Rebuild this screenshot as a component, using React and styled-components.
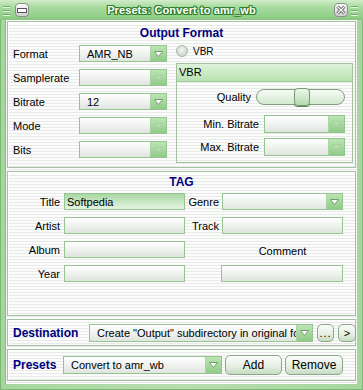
import { Fragment } from 'react';
import styled, { createGlobalStyle, css } from 'styled-components';

const GlobalStyle = createGlobalStyle`
  html, body {
    margin: 0;
    padding: 0;
    background: #fff;
  }
  body {
    font-family: 'Liberation Sans', Arial, sans-serif;
    font-size: 11px;
    color: #000;
  }
`;

const stripes = css`
  background: repeating-linear-gradient(
    to bottom,
    #fbfcfb 0,
    #fbfcfb 2px,
    #e7eae7 2px,
    #e7eae7 3px
  );
`;

const Window = styled.div`
  width: 363px;
  height: 390px;
  box-sizing: border-box;
  display: flex;
  flex-direction: column;
  background: linear-gradient(to right, #a6d69e, #b6deaf 50%, #a6d69e);
  box-shadow: inset 0 0 0 1px #7cb875;
`;

const TitleBar = styled.div`
  height: 20px;
  flex: none;
  display: flex;
  align-items: center;
  padding: 0 5px 0 3px;
  box-sizing: border-box;
  background: linear-gradient(to bottom, #d2ecca 0, #a8dca0 35%, #93d08a 80%, #86c47e 100%);
`;

const Grip = styled.div`
  width: 7px;
  height: 11px;
  background: repeating-linear-gradient(
    to bottom,
    #6fae68 0,
    #6fae68 1px,
    #e6f5e2 1px,
    #e6f5e2 2px,
    transparent 2px,
    transparent 4px
  );
  margin-top: 2px;
`;

const WinButton = styled.div`
  width: 14px;
  height: 14px;
  box-sizing: border-box;
  border: 1px solid #8d8d8d;
  border-radius: 4px;
  background: linear-gradient(to bottom, #fbfbfb, #cfd2cf);
  display: flex;
  align-items: center;
  justify-content: center;
  margin: ${(p) => (p.$right ? '0 3px 0 0' : '0 0 0 5px')};
`;

const Title = styled.div`
  flex: 1;
  text-align: center;
  font-weight: bold;
  font-size: 11px;
  color: #fff;
  letter-spacing: 0.1px;
  text-shadow: -1px 0 #2f7f2a, 1px 0 #2f7f2a, 0 -1px #2f7f2a, 0 1px #2f7f2a,
    1px 1px #2f7f2a, -1px -1px #2f7f2a, 1px -1px #2f7f2a, -1px 1px #2f7f2a;
`;

const Body = styled.div`
  flex: 1;
  margin: 0 6px 6px 5px;
  padding: 1px 1px 3px 1px;
  display: flex;
  flex-direction: column;
  gap: 3px;
  border-left: 1px solid #86bd80;
  ${stripes};
`;

const Panel = styled.section`
  height: ${(p) => p.$h}px;
  flex: none;
  box-sizing: border-box;
  border: 1px solid #a3c3a0;
  box-shadow: inset 1px 1px 0 #ffffff;
  display: flex;
  flex-direction: ${(p) => (p.$row ? 'row' : 'column')};
  align-items: ${(p) => (p.$row ? 'center' : 'stretch')};
  padding-left: ${(p) => (p.$row ? '5px' : '0')};
`;

const Heading = styled.h2`
  margin: 0;
  height: ${(p) => p.$h}px;
  line-height: ${(p) => p.$h}px;
  text-align: center;
  font-size: 12px;
  font-weight: bold;
  color: #000080;
`;

const InlineHeading = styled.span`
  width: ${(p) => p.$w}px;
  flex: none;
  font-size: 12px;
  font-weight: bold;
  color: #000080;
`;

const FormatColumns = styled.div`
  display: flex;
  padding-left: 5px;
  gap: 9px;
`;

const LeftGrid = styled.div`
  display: grid;
  grid-template-columns: 66px 88px;
  grid-auto-rows: 17px;
  row-gap: 7px;
  align-items: center;
`;

const Label = styled.span`
  white-space: nowrap;
  text-align: ${(p) => p.$align || 'left'};
  padding-right: ${(p) => p.$pr || 0}px;
`;

const RightCol = styled.div`
  width: 177px;
  display: flex;
  flex-direction: column;
`;

const CheckRow = styled.div`
  height: 12px;
  display: flex;
  align-items: center;
  gap: 5px;
  font-size: 10px;
`;

const Radio = styled.span`
  width: 12px;
  height: 12px;
  box-sizing: border-box;
  border-radius: 50%;
  border: 1px solid #a9b7a8;
  background: radial-gradient(circle at 45% 40%, #f4f7f4 0, #d2dcd1 60%, #b8c7b6 100%);
`;

const GroupBox = styled.div`
  margin-top: 6px;
  height: 100px;
  box-sizing: border-box;
  border: 1px solid #a3c3a0;
  display: flex;
  flex-direction: column;
`;

const GroupHeader = styled.div`
  height: 17px;
  line-height: 17px;
  padding-left: 2px;
  background: linear-gradient(to bottom, #dff2da, #b9e1b1);
  border-bottom: 1px solid #9fcf98;
`;

const GroupRow = styled.div`
  display: flex;
  align-items: center;
  justify-content: flex-end;
  gap: 5px;
  padding-right: 7px;
  margin-top: ${(p) => p.$mt}px;
`;

const Track = styled.div`
  position: relative;
  width: 89px;
  height: 16px;
  box-sizing: border-box;
  border: 1px solid #7f9f7b;
  border-radius: 8px;
  background: linear-gradient(to bottom, #f6fbf5, #d3e8ce);
`;

const Thumb = styled.div`
  position: absolute;
  top: -2px;
  width: 16px;
  height: 18px;
  box-sizing: border-box;
  border: 1px solid #789874;
  border-radius: 4px;
  background: linear-gradient(to bottom, #eef8eb, #b3dbab);
  box-shadow: 0 1px 0 #5f7f5b;
`;

const Combo = styled.div`
  width: ${(p) => p.$w}px;
  height: ${(p) => p.$h || 17}px;
  flex: none;
  box-sizing: border-box;
  border: 1px solid #96c490;
  background: linear-gradient(to bottom, #ffffff, #e0e5e0);
  display: flex;
`;

const ComboText = styled.span`
  flex: 1;
  min-width: 0;
  overflow: hidden;
  white-space: nowrap;
  padding-left: 7px;
  display: flex;
  align-items: center;
`;

const DropButton = styled.span`
  width: 15px;
  flex: none;
  display: flex;
  align-items: center;
  justify-content: center;
  background: linear-gradient(to bottom, #bde4b5, #90cb88);
  border-left: 1px solid #a9d4a3;
`;

const TagGrid = styled.div`
  display: grid;
  grid-template-columns: 56px 121px 37px 121px;
  grid-auto-rows: 17px;
  row-gap: 7px;
  align-items: center;
`;

const Field = styled.div`
  height: 17px;
  box-sizing: border-box;
  border: 1px solid #96c490;
  background: ${(p) =>
    p.$filled
      ? 'linear-gradient(to bottom, #a9d8a3, #d4ecd0 70%, #e4f2e1)'
      : 'linear-gradient(to bottom, #ffffff, #dfe4df)'};
  padding-left: 2px;
  display: flex;
  align-items: center;
  margin-left: ${(p) => p.$ml || 0}px;
`;

const CommentLabel = styled.span`
  align-self: end;
  text-align: center;
  margin-bottom: 1px;
  line-height: 11px;
`;

const PushButton = styled.button`
  width: ${(p) => p.$w}px;
  height: ${(p) => p.$h || 18}px;
  margin-left: ${(p) => p.$ml || 4}px;
  flex: none;
  padding: 0;
  box-sizing: border-box;
  border: 1px solid #8ba888;
  border-radius: 5px;
  background: linear-gradient(to bottom, #fbfdfb, #e3eee1 60%, #c6dcc2);
  font-family: 'Liberation Sans', Arial, sans-serif;
  font-size: ${(p) => p.$fs || 11}px;
  color: #000;
  letter-spacing: ${(p) => p.$ls || 0}px;
`;

const Arrow = ({ faded }) => (
  <svg width="9" height="6" viewBox="0 0 9 6">
    <path
      d="M0.5 0.5 H8.5 L4.5 5.5 Z"
      fill={faded ? '#b7ddb0' : '#ffffff'}
      stroke={faded ? '#a5d19e' : '#6f9f6a'}
      strokeWidth="1"
    />
  </svg>
);

const ComboBox = ({ w, h, text, faded }) => (
  <Combo $w={w} $h={h}>
    <ComboText>{text}</ComboText>
    <DropButton>
      <Arrow faded={faded} />
    </DropButton>
  </Combo>
);

const formatRows = [
  { label: 'Format', value: 'AMR_NB' },
  { label: 'Samplerate', value: '' },
  { label: 'Bitrate', value: '12' },
  { label: 'Mode', value: '' },
  { label: 'Bits', value: '' },
];

const quality = 0.42;

export default function App() {
  return (
    <>
      <GlobalStyle />
      <Window>
        <TitleBar>
          <Grip />
          <WinButton>
            <svg width="10" height="5" viewBox="0 0 10 5">
              <rect x="0.5" y="0.5" width="9" height="4" fill="#fff" stroke="#555" />
            </svg>
          </WinButton>
          <Title>Presets: Convert to amr_wb</Title>
          <WinButton $right>
            <svg width="10" height="10" viewBox="0 0 10 10">
              <path d="M1.5 1.5 L8.5 8.5 M8.5 1.5 L1.5 8.5" stroke="#555" strokeWidth="3" />
              <path d="M1.5 1.5 L8.5 8.5 M8.5 1.5 L1.5 8.5" stroke="#fff" strokeWidth="1.2" />
            </svg>
          </WinButton>
          <Grip />
        </TitleBar>

        <Body>
          <Panel $h={147}>
            <Heading $h={23}>Output Format</Heading>
            <FormatColumns>
              <LeftGrid>
                {formatRows.map((r) => (
                  <Fragment key={r.label}>
                    <Label>{r.label}</Label>
                    <ComboBox w={88} text={r.value} faded={!r.value} />
                  </Fragment>
                ))}
              </LeftGrid>
              <RightCol>
                <CheckRow>
                  <Radio />
                  VBR
                </CheckRow>
                <GroupBox>
                  <GroupHeader>VBR</GroupHeader>
                  <GroupRow $mt={7}>
                    <Label>Quality</Label>
                    <Track>
                      <Thumb style={{ left: `${Math.round(quality * 89)}px` }} />
                    </Track>
                  </GroupRow>
                  <GroupRow $mt={10}>
                    <Label>Min. Bitrate</Label>
                    <ComboBox w={81} h={18} text="" faded />
                  </GroupRow>
                  <GroupRow $mt={5}>
                    <Label>Max. Bitrate</Label>
                    <ComboBox w={81} h={18} text="" faded />
                  </GroupRow>
                </GroupBox>
              </RightCol>
            </FormatColumns>
          </Panel>

          <Panel $h={145}>
            <Heading $h={21}>TAG</Heading>
            <TagGrid>
              <Label $align="right" $pr={4}>Title</Label>
              <Field $filled>Softpedia</Field>
              <Label $align="right" $pr={3}>Genre</Label>
              <ComboBox w={121} text="" />

              <Label $align="right" $pr={4}>Artist</Label>
              <Field />
              <Label $align="right" $pr={3}>Track</Label>
              <Field />

              <Label $align="right" $pr={4}>Album</Label>
              <Field />
              <span />
              <CommentLabel>Comment</CommentLabel>

              <Label $align="right" $pr={4}>Year</Label>
              <Field />
              <span />
              <Field $ml={-1} />
            </TagGrid>
          </Panel>

          <Panel $h={27} $row>
            <InlineHeading $w={76}>Destination</InlineHeading>
            <ComboBox w={224} h={18} text={'Create "Output" subdirectory in original folder'} />
            <PushButton $w={17} $ls={1}>...</PushButton>
            <PushButton $w={18}>&gt;</PushButton>
          </Panel>

          <Panel $h={32} $row>
            <InlineHeading $w={50}>Presets</InlineHeading>
            <ComboBox w={159} h={18} text="Convert to amr_wb" />
            <PushButton $w={57} $h={20} $ml={3} $fs={12}>Add</PushButton>
            <PushButton $w={58} $h={20} $ml={3} $fs={12}>Remove</PushButton>
          </Panel>
        </Body>
      </Window>
    </>
  );
}
